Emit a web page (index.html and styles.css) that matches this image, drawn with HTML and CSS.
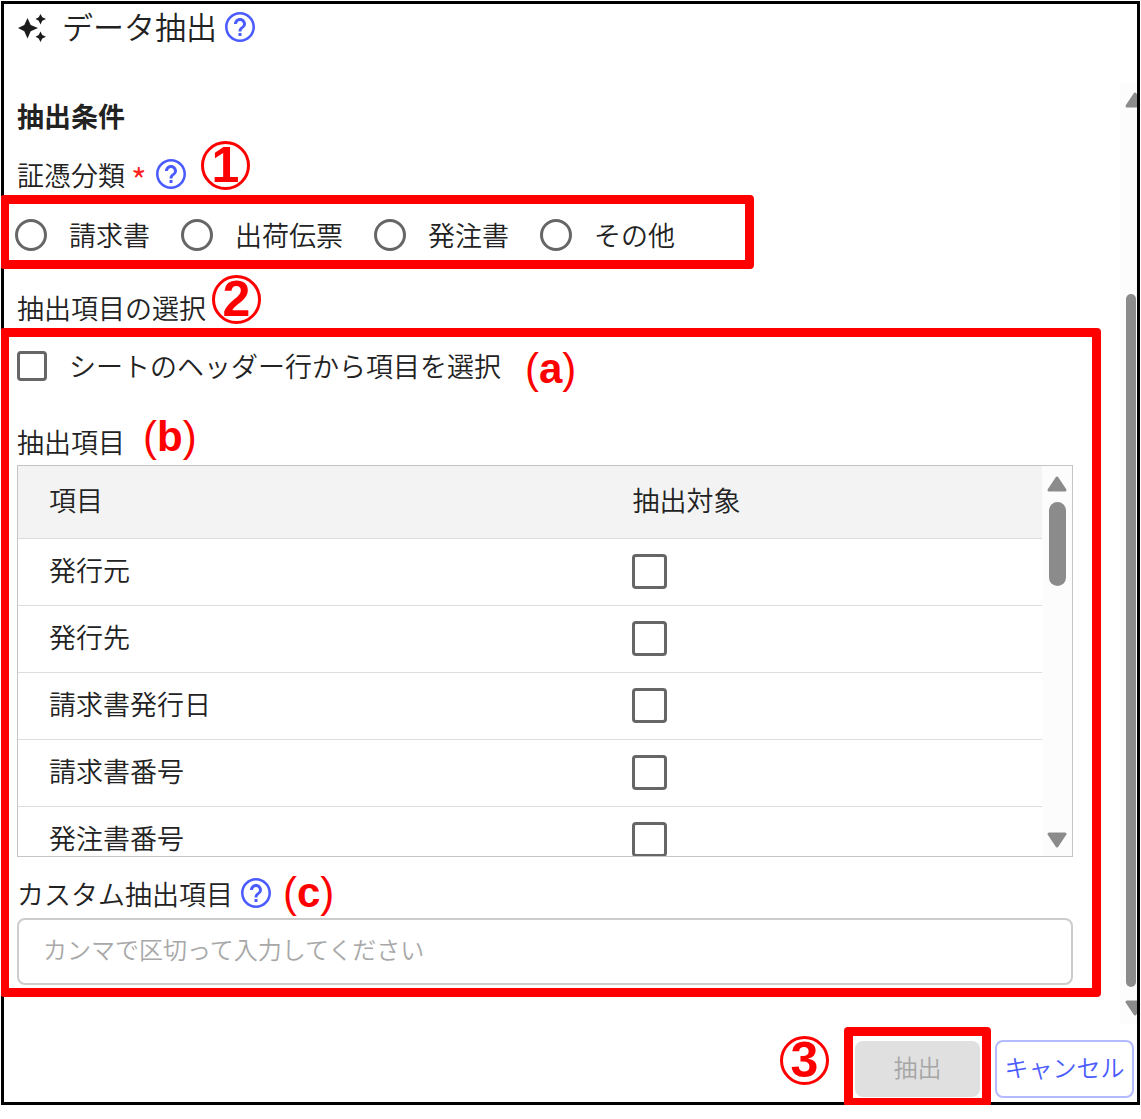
FILE: index.html
```html
<!DOCTYPE html>
<html lang="ja">
<head>
<meta charset="utf-8">
<meta name="viewport" content="width=device-width, initial-scale=1">
<title>データ抽出</title>
<link rel="stylesheet" href="styles.css">
</head>
<body>
<svg class="defs" aria-hidden="true">
  <symbol id="help" viewBox="2 2 20 20"><path d="M11 18h2v-2h-2v2zm1-16C6.48 2 2 6.48 2 12s4.48 10 10 10 10-4.48 10-10S17.52 2 12 2zm0 18.300c-4.580 0-8.300-3.720-8.300-8.300s3.720-8.300 8.300-8.300 8.300 3.720 8.300 8.300-3.720 8.300-8.300 8.300zm0-14.300c-2.210 0-4 1.790-4 4h2c0-1.100.9-2 2-2s2 .9 2 2c0 2-3 1.750-3 5h2c0-2.250 3-2.500 3-5 0-2.210-1.790-4-4-4z"/></symbol>
  <symbol id="arrow-up" viewBox="0 0 20 16"><path d="M10 2 18 14H2Z" stroke-width="3" stroke-linejoin="round"/></symbol>
  <symbol id="arrow-down" viewBox="0 0 20 16"><path d="M10 14 18 2H2Z" stroke-width="3" stroke-linejoin="round"/></symbol>
</svg>
<main class="dialog">
  <header class="dialog-header">
    <svg class="sparkle" viewBox="0 0 28 30" aria-hidden="true">
      <path d="M9.500 5 12.700 12 20 15 12.700 18.200 9.500 25.500 6.300 18.200 0 15 6.300 12Z"/>
      <path d="M22.500 1 24.300 4.300 28 6 24.300 7.800 22.500 11.500 20.700 7.800 17.500 6 20.700 4.300Z"/>
      <path d="M22.500 18.500 24.300 22 28 23.700 24.300 25.500 22.500 29 20.700 25.500 17.500 23.700 20.700 22Z"/>
    </svg>
    <h1 class="dialog-title">データ抽出</h1>
    <svg class="help" role="img" aria-label="ヘルプ"><use href="#help"/></svg>
  </header>

  <div class="dialog-body">
    <div class="content">
      <h2 class="section-title">抽出条件</h2>
      <div class="field-label kind-label">
        <span id="kind">証憑分類</span><span class="required">*</span>
        <svg class="help" role="img" aria-label="ヘルプ"><use href="#help"/></svg>
        <span class="step step-one">1</span>
      </div>
      <div class="marked kinds" role="radiogroup" aria-labelledby="kind">
        <label class="choice"><input class="radio" type="radio" name="kind">請求書</label>
        <label class="choice"><input class="radio" type="radio" name="kind">出荷伝票</label>
        <label class="choice"><input class="radio" type="radio" name="kind">発注書</label>
        <label class="choice"><input class="radio" type="radio" name="kind">その他</label>
      </div>
      <div class="field-label select-label">抽出項目の選択<span class="step step-two">2</span></div>

      <section class="marked items">
        <div class="header-row">
          <label class="choice"><input class="checkbox" type="checkbox">シートのヘッダー行から項目を選択</label>
          <span class="note note-a">(<b>a</b>)</span>
        </div>
        <div class="field-label items-label">抽出項目<span class="note note-b">(<b>b</b>)</span></div>
        <div class="table-box">
          <table class="item-table">
            <thead><tr><th class="name-col">項目</th><th>抽出対象</th></tr></thead>
            <tbody>
              <tr><td><label for="i1">発行元</label></td><td><input class="checkbox large" type="checkbox" id="i1"></td></tr>
              <tr><td><label for="i2">発行先</label></td><td><input class="checkbox large" type="checkbox" id="i2"></td></tr>
              <tr><td><label for="i3">請求書発行日</label></td><td><input class="checkbox large" type="checkbox" id="i3"></td></tr>
              <tr><td><label for="i4">請求書番号</label></td><td><input class="checkbox large" type="checkbox" id="i4"></td></tr>
              <tr><td><label for="i5">発注書番号</label></td><td><input class="checkbox large" type="checkbox" id="i5"></td></tr>
            </tbody>
          </table>
          <div class="table-scroll" aria-hidden="true">
            <svg class="arrow"><use href="#arrow-up"/></svg>
            <div class="track"><div class="thumb"></div></div>
            <svg class="arrow"><use href="#arrow-down"/></svg>
          </div>
        </div>
        <div class="field-label custom-label">
          <label for="custom">カスタム抽出項目</label>
          <svg class="help" role="img" aria-label="ヘルプ"><use href="#help"/></svg>
          <span class="note note-c">(<b>c</b>)</span>
        </div>
        <input class="text-input" id="custom" type="text" placeholder="カンマで区切って入力してください">
      </section>
    </div>
    <div class="page-scroll" aria-hidden="true">
      <svg class="arrow"><use href="#arrow-up"/></svg>
      <div class="track"><div class="page-thumb"></div></div>
      <svg class="arrow"><use href="#arrow-down"/></svg>
    </div>
  </div>

  <footer class="dialog-footer">
    <div class="marked submit-mark">
      <span class="step step-three">3</span>
      <button class="button submit" type="button" disabled>抽出</button>
    </div>
    <button class="button cancel" type="button">キャンセル</button>
  </footer>
</main>
</body>
</html>
```
FILE: styles.css
```css
* { box-sizing: border-box; }

body {
  margin: 1px;
  background: #fff;
  color: #222;
  font-family: "Noto Sans CJK JP", sans-serif;
  font-size: 27px;
  font-weight: 350;
  line-height: 40px;
}

h1, h2 { margin: 0; }

.defs { position: absolute; width: 0; height: 0; }

.dialog {
  border: 3px solid #000;
}

.dialog-header {
  display: flex;
  align-items: center;
  height: 48px;
  margin-bottom: 30px;
  padding-left: 14px;
}

.sparkle { width: 28px; height: 30px; margin-right: 16px; fill: #1c1c1c; }

.dialog-title { margin-right: 8px; padding-bottom: 4px; font-size: 31px; font-weight: 350; }

.help { flex: none; width: 30px; height: 30px; margin-bottom: 3px; fill: #4a5cff; }

.dialog-body { display: flex; }

.content { flex: 1; padding: 14px 47px 27px 13px; }

.section-title { font-size: 27px; font-weight: 700; }

.field-label { display: flex; align-items: center; position: relative; height: 40px; }

.kind-label { margin-top: 19px; }

.required {
  margin: 0 9px 0 6px;
  padding-top: 9px;
  color: #f22;
  font-size: 34px;
}

/* red call-out frames reach over the dialog's left edge */
.marked {
  border: 9px solid #f00;
  border-radius: 4px;
}

.kinds {
  display: flex;
  gap: 31px;
  width: fit-content;
  margin-left: -17px;
  padding: 11px 70px 5px 6px;
}

.choice { display: flex; align-items: center; gap: 22px; }

.radio, .checkbox {
  appearance: none;
  flex: none;
  margin: 0;
  border: 3px solid #666;
  background: #fff;
}

.radio { width: 32px; height: 32px; border-radius: 50%; }

.checkbox { width: 30px; height: 30px; border-radius: 4px; }

.checkbox.large { display: block; width: 35px; height: 35px; }

.select-label { margin-top: 19px; }

.items {
  margin: 0 -28px 0 -17px;
  padding: 9px 19px 3px 8px;
}

.header-row { position: relative; }

.items-label { margin-top: 36px; }

.table-box {
  display: flex;
  align-items: flex-start;
  height: 392px;
  margin-top: 3px;
  border: 1px solid #c4c4c4;
  overflow: hidden;
}

.item-table { flex: 1; border-collapse: collapse; table-layout: fixed; }

.item-table th, .item-table td {
  height: 67px;
  padding: 0;
  border-bottom: 1px solid #ddd;
  text-align: left;
  font-weight: 350;
}

.item-table th { height: 72px; padding-bottom: 3px; background: #f3f3f3; }

.item-table th:first-child, .item-table td:first-child { padding: 0 0 4px 31px; }

.name-col { width: 60%; }

.table-scroll {
  display: flex;
  flex-direction: column;
  align-items: center;
  align-self: stretch;
  width: 30px;
  padding: 10px 0 8px;
  background: #fcfcfc;
}

.arrow { flex: none; width: 20px; height: 16px; fill: #8b8b8b; stroke: #8b8b8b; }

.track { flex: 1; padding: 10px 0; }

.thumb { width: 17px; height: 84px; border-radius: 9px; background: #8b8b8b; }

.page-scroll {
  display: flex;
  flex-direction: column;
  width: 17px;
  padding: 10px 0 8px 5px;
  background: #fcfcfc;
  overflow: hidden;
}

.page-scroll .track { display: flex; align-items: flex-end; padding: 13px 1px; }

.page-thumb { width: 19px; height: 80%; border-radius: 9px; background: #8b8b8b; }

.custom-label { margin-top: 17px; }

.custom-label .help { margin-left: 8px; }

.text-input {
  display: block;
  width: 100%;
  height: 67px;
  margin-top: 4px;
  padding: 0 24px 6px;
  border: 2px solid #ccc;
  border-radius: 8px;
  background: #fff;
  font: inherit;
  font-size: 24px;
}

.text-input::placeholder { color: #a8a8a8; opacity: 1; }

.dialog-footer {
  display: flex;
  justify-content: flex-end;
  align-items: flex-end;
  gap: 4px;
  padding: 3px 3px 4px;
}

.submit-mark {
  position: relative;
  margin-bottom: -9px;
  padding: 5px 2px 1px;
}

.button {
  display: block;
  padding: 0 0 4px;
  border: 0;
  border-radius: 8px;
  font: inherit;
  font-size: 24px;
}

.submit { width: 125px; height: 56px; background: #e0e0e0; color: #a6a6a6; }

.cancel {
  width: 139px;
  height: 58px;
  border: 2px solid #b3baff;
  background: #fff;
  color: #4a5cff;
}

/* numbered and lettered call-outs */
.step {
  position: absolute;
  width: 49px;
  height: 49px;
  border: 3px solid #f00;
  border-radius: 50%;
  color: #f00;
  font: 700 50px/43px "Liberation Sans", sans-serif;
  text-align: center;
}

.step-one { left: 184px; top: -14px; }
.step-two { left: 195px; top: -13px; }
.step-three { left: -73px; top: 0; }

.note {
  position: absolute;
  color: #f00;
  font: 400 42px/42px "Liberation Sans", sans-serif;
}

.note-a { left: 508px; top: 2px; }
.note-b { left: 126px; top: -6px; }
.note-c { left: 266px; top: -2px; }
```
